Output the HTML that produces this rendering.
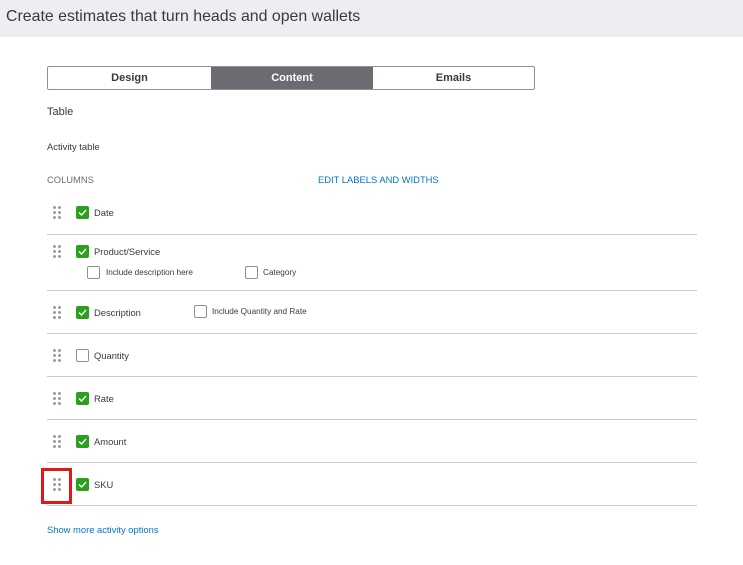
<!DOCTYPE html>
<html><head><style>
*{margin:0;padding:0;box-sizing:border-box}
body{width:743px;height:565px;background:#fff;font-family:"Liberation Sans",sans-serif;color:#393a3d;position:relative;overflow:hidden}
.hdr{position:absolute;left:0;top:0;width:743px;height:37px;background:#eceef1}
.hdr span{position:absolute;left:6px;top:8px;font-size:15.9px;color:#393a3d}
.tabs{position:absolute;left:47px;top:66px;width:488px;height:24px;border:1px solid #8d9096;border-radius:2px;display:flex;overflow:hidden}
.tabs div{flex:0 0 auto;text-align:center;font-size:11px;font-weight:bold;line-height:22px}
.t{position:absolute;font-size:9.4px;white-space:nowrap}
.s{font-size:8.2px}
.line{position:absolute;left:47px;width:650px;height:1px;background:#c9cacd}
.cb{position:absolute;width:13px;height:13px;border-radius:2px;background:#2ca01c}
.cb svg{position:absolute;left:2px;top:3px}
.ub{position:absolute;width:13px;height:13px;border-radius:2px;border:1px solid #8d9096;background:#fff}
.dh{position:absolute;width:8px;height:12px}
.dh i{position:absolute;width:3px;height:3px;border-radius:50%;background:#9a9ca0}
</style></head><body>
<div class="hdr"><span>Create estimates that turn heads and open wallets</span></div>
<div class="tabs"><div style="width:163px">Design</div><div style="width:162px;background:#6b6c72;color:#fff">Content</div><div style="width:161px">Emails</div></div>
<div class="t" style="left:47px;top:106px;font-size:11px">Table</div>
<div class="t" style="left:47px;top:141px">Activity table</div>
<div class="t" style="left:47px;top:174px;color:#6b6c72">COLUMNS</div>
<div class="t" style="left:318px;top:174px;color:#0077c5">EDIT LABELS AND WIDTHS</div>

<div id="rows"></div>
<div style="position:absolute;left:41px;top:468px;width:31px;height:36px;border:3px solid #e0181c"></div>
<div class="t" style="left:47px;top:524px;color:#0077c5">Show more activity options</div>
<script>
var rows=[["Date",212,1],["Product/Service",251,1],["Description",312,1],["Quantity",355,0],["Rate",398,1],["Amount",441,1],["SKU",484,1]];
var lines=[234,290,333,376,419,462,505];
var h="";
rows.forEach(function(r){var y=r[1];
h+='<div class="dh" style="left:53px;top:'+(y-6)+'px">';
[[0,0],[5,0],[0,5],[5,5],[0,10],[5,10]].forEach(function(p){h+='<i style="left:'+p[0]+'px;top:'+p[1]+'px"></i>'});
h+='</div>';
if(r[2])h+='<div class="cb" style="left:76px;top:'+(y-6)+'px"><svg width="9" height="7" viewBox="0 0 9 7"><path d="M1 3.5L3.5 6L8 1" stroke="#fff" stroke-width="1.4" fill="none"/></svg></div>';
else h+='<div class="ub" style="left:76px;top:'+(y-6)+'px"></div>';
h+='<div class="t" style="left:94px;top:'+(y-5)+'px">'+r[0]+'</div>';});
lines.forEach(function(y){h+='<div class="line" style="top:'+y+'px"></div>'});
h+='<div class="ub" style="left:87px;top:266px"></div><div class="t s" style="left:106px;top:268px">Include description here</div>';
h+='<div class="ub" style="left:245px;top:266px"></div><div class="t s" style="left:263px;top:268px">Category</div>';
h+='<div class="ub" style="left:194px;top:305px"></div><div class="t s" style="left:212px;top:307px">Include Quantity and Rate</div>';
document.getElementById("rows").innerHTML=h;
</script>
</body></html>
